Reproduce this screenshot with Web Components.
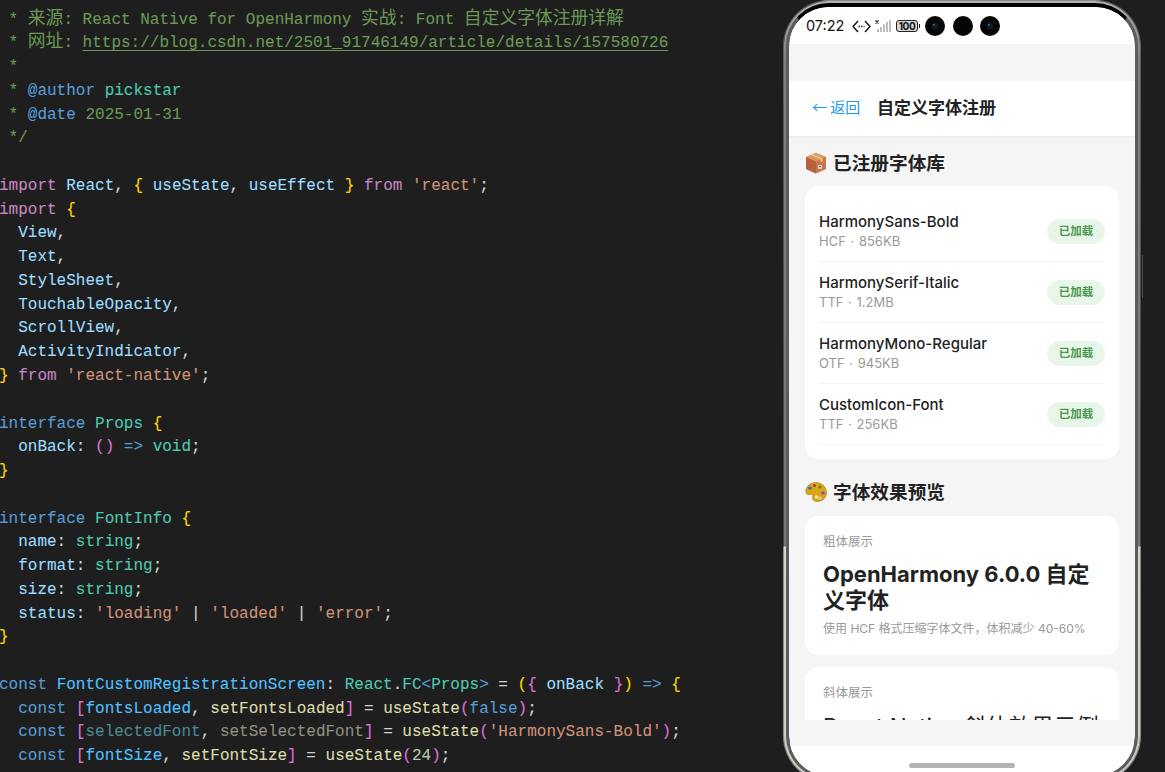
<!DOCTYPE html>
<html>
<head>
<meta charset="utf-8">
<title>Font registration</title>
<style>
    html, body { margin: 0; height: 772px; overflow: hidden; background: #1e1e1e; }
    body { display: flex; align-items: flex-start; }
</style>
</head>
<body>
<code-editor></code-editor>
<phone-frame>
    <status-bar></status-bar>
    <div style="height:37px"></div>
    <nav-header back="← 返回" title="自定义字体注册"></nav-header>
    <scroll-area>
        <section-title icon="box">已注册字体库</section-title>
        <font-list>
            <font-row name="HarmonySans-Bold" meta="HCF · 856KB"></font-row>
            <font-row name="HarmonySerif-Italic" meta="TTF · 1.2MB"></font-row>
            <font-row name="HarmonyMono-Regular" meta="OTF · 945KB"></font-row>
            <font-row name="CustomIcon-Font" meta="TTF · 256KB"></font-row>
        </font-list>
        <section-title icon="palette" style="margin-bottom:13px">字体效果预览</section-title>
        <preview-card label="粗体展示" kind="bold" note="使用 HCF 格式压缩字体文件，体积减少 40-60%">OpenHarmony 6.0.0 自定义字体</preview-card>
        <preview-card label="斜体展示" kind="italic">React Native 斜体效果示例</preview-card>
    </scroll-area>
    <home-bar></home-bar>
</phone-frame>

<script>
const UI_FONT = 'Inter, "Noto Sans CJK SC", sans-serif';

// §class|text§ marks one coloured token
const CODE = [
    '§c| * 来源: React Native for OpenHarmony 实战: Font 自定义字体注册详解§',
    '§c| * 网址: §§u|https://blog.csdn.net/2501_91746149/article/details/157580726§',
    '§c| *§',
    '§c| * §§d|@author§ §t|pickstar§',
    '§c| * §§d|@date§§c| 2025-01-31§',
    '§c| */§',
    '',
    '§k|import§ §v|React§§p|,§ §y|{§ §v|useState§§p|,§ §v|useEffect§ §y|}§ §k|from§ §s|\'react\'§§p|;§',
    '§k|import§ §y|{§',
    '  §v|View§§p|,§',
    '  §v|Text§§p|,§',
    '  §v|StyleSheet§§p|,§',
    '  §v|TouchableOpacity§§p|,§',
    '  §v|ScrollView§§p|,§',
    '  §v|ActivityIndicator§§p|,§',
    '§y|}§ §k|from§ §s|\'react-native\'§§p|;§',
    '',
    '§d|interface§ §t|Props§ §y|{§',
    '  §v|onBack§§p|:§ §m|()§ §d|=>§ §t|void§§p|;§',
    '§y|}§',
    '',
    '§d|interface§ §t|FontInfo§ §y|{§',
    '  §v|name§§p|:§ §t|string§§p|;§',
    '  §v|format§§p|:§ §t|string§§p|;§',
    '  §v|size§§p|:§ §t|string§§p|;§',
    '  §v|status§§p|:§ §s|\'loading\'§ §p|\\|§ §s|\'loaded\'§ §p|\\|§ §s|\'error\'§§p|;§',
    '§y|}§',
    '',
    '§d|const§ §b|FontCustomRegistrationScreen§§p|:§ §t|React§§p|.§§t|FC§§d|&lt;§§t|Props§§d|&gt;§ §p|=§ §y|(§§m|{§ §v|onBack§ §m|}§§y|)§ §d|=>§ §y|{§',
    '  §d|const§ §m|[§§b2|fontsLoaded§§p|,§ §f|setFontsLoaded§§m|]§ §p|=§ §f|useState§§m|(§§d|false§§m|)§§p|;§',
    '  §d|const§ §m|[§§dv|selectedFont§§p|,§ §df|setSelectedFont§§m|]§ §p|=§ §f|useState§§m|(§§s|\'HarmonySans-Bold\'§§m|)§§p|;§',
    '  §d|const§ §m|[§§b2|fontSize§§p|,§ §f|setFontSize§§m|]§ §p|=§ §f|useState§§m|(§§n|24§§m|)§§p|;§',
];

class CodeEditor extends HTMLElement {
    connectedCallback() {
        this.attachShadow({ mode: 'open' });
        let lines = CODE.map(line => {
            let html = line.replace(/§(\w+)\|(.*?)§/g, (_, cls, text) => {
                return `<span class="${cls}">${text.replace(/\\\|/g, '|')}</span>`;
            });
            // CJK runs get the size the editor fallback font had
            html = html.replace(/[\u4e00-\u9fff]+/g, m => `<span class="cjk">${m}</span>`);
            return `<div class="line">${html || ' '}</div>`;
        }).join('');
        this.shadowRoot.innerHTML = `
            <style>
                :host {
                    display: block;
                    flex: 0 0 783px;
                    height: 772px;
                    overflow: hidden;
                    background: #1e1e1e;
                    box-sizing: border-box;
                    padding-top: 8.5px;
                    font: 16px/23.77px "Liberation Mono", monospace;
                    color: #d4d4d4;
                    -webkit-text-stroke: 0.1px;
                }
                .line { white-space: pre; height: 23.77px; margin-left: -1px; }
                .cjk { font: 17.8px/0 "Noto Sans CJK SC", sans-serif; -webkit-text-stroke: 0; }
                .c { color: #6a9955; }
                .u { color: #6a9955; text-decoration: underline; text-underline-offset: 3px; }
                .k { color: #c586c0; }
                .d { color: #569cd6; }
                .v { color: #9cdcfe; }
                .t { color: #4ec9b0; }
                .s { color: #ce9178; }
                .f { color: #dcdcaa; }
                .y { color: #ffd700; }
                .m { color: #da70d6; }
                .b { color: #4fc1ff; }
                .b2 { color: #4fc1ff; }
                .n { color: #b5cea8; }
                .p { color: #d4d4d4; }
                .dv { color: #4a8a94; }
                .df { color: #8f8f7c; }
            </style>
            ${lines}
        `;
    }
}

class PhoneFrame extends HTMLElement {
    connectedCallback() {
        this.attachShadow({ mode: 'open' });
        this.shadowRoot.innerHTML = `
            <style>
                :host {
                    display: block;
                    flex: 0 0 358px;
                    height: 782px;
                    position: relative;
                }
                .outer {
                    height: 100%;
                    box-sizing: border-box;
                    border-radius: 46px;
                    border: 1px solid transparent;
                    background: linear-gradient(180deg, #5e5e5e 0, #404040 545px, #8d8c84 546px, #8d8c84 100%);
                    overflow: hidden;
                }
                .rim {
                    height: 100%;
                    box-sizing: border-box;
                    padding: 2px 2px 2px;
                    border-radius: 45px;
                    background: linear-gradient(180deg, #b0b0b0 0, #808080 60px, #767676 545px, #d8d5c8 546px, #cfcdc2 100%);
                }
                .bezel {
                    height: 100%;
                    box-sizing: border-box;
                    border-radius: 43px;
                    border: solid #5c5c5c;
                    border-width: 4px 3px 3px;
                    border-top-color: #000;
                    background: #000;
                    overflow: hidden;
                }
                .screen {
                    height: 100%;
                    display: flex;
                    flex-direction: column;
                    background: #f5f5f5;
                    border-radius: 38px;
                    overflow: hidden;
                    font-family: ${UI_FONT};
                    color: #222;
                }
                .key {
                    position: absolute;
                    left: 358.5px;
                    top: 255px;
                    width: 1px;
                    height: 43px;
                    background: #4a4a4a;
                }
            </style>
            <div class="outer"><div class="rim"><div class="bezel"><div class="screen"><slot></slot></div></div></div></div>
            <div class="key"></div>
        `;
    }
}

class StatusBar extends HTMLElement {
    connectedCallback() {
        this.attachShadow({ mode: 'open' });
        let camera = `<svg width="20" height="20" viewBox="0 0 20 20"><circle cx="10" cy="10" r="10" fill="#050505"/><circle cx="10" cy="10" r="3.5" fill="#0c1b26"/><circle cx="9" cy="9" r="1" fill="#3a6f8f"/></svg>`;
        this.shadowRoot.innerHTML = `
            <style>
                :host {
                    display: flex;
                    align-items: center;
                    flex: 0 0 37px;
                    background: #fff;
                    padding-left: 17px;
                    box-sizing: border-box;
                }
                .time { font-size: 14.5px; width: 46px; color: #111; }
                .icons { display: flex; align-items: center; gap: 4px; width: 73px; margin-top: 1px; }
                .cams { display: flex; gap: 7.5px; }
                .cams svg { display: block; }
                .batt {
                    font: bold 10px/10px ${UI_FONT};
                    flex: none;
                    width: 22px;
                    height: 12px;
                    box-sizing: border-box;
                    border: 1px solid #222;
                    border-radius: 3px;
                    background: #d6d6d6;
                    text-align: center;
                    color: #111;
                    letter-spacing: -0.4px;
                }
                .nub { flex: none; width: 1px; height: 4px; background: #222; margin-left: -3px; }
            </style>
            <span class="time">07:22</span>
            <span class="icons">
                <svg width="19" height="13" viewBox="0 0 19 13" fill="none" stroke="#111" stroke-width="1.4"><path d="M6 1 1 6.500l5 5.500M13 1l5 5.500-5 5.500"/><path d="M6.500 6.500h6" stroke-dasharray="1.4 1.2"/></svg>
                <svg width="17" height="14" viewBox="0 0 17 14"><path d="M.5 1.500l3 3M3.500 1.500l-3 3" stroke="#222" stroke-width="1.2"/><g fill="#bdbdbd"><rect x="2" y="10" width="2" height="3"/><rect x="5" y="8" width="2" height="5"/><rect x="8" y="5.5" width="2" height="7.5"/><rect x="11" y="3" width="2" height="10"/><rect x="14" y="1" width="2" height="12"/></g></svg>
                <span class="batt">100</span><span class="nub"></span>
            </span>
            <span class="cams">${camera}${camera.replace(/<circle cx="9".*?\/>/, '').replace('#0c1b26', '#050505')}${camera}</span>
        `;
    }
}

class NavHeader extends HTMLElement {
    connectedCallback() {
        this.attachShadow({ mode: 'open' });
        this.shadowRoot.innerHTML = `
            <style>
                :host {
                    display: flex;
                    align-items: center;
                    flex: 0 0 57px;
                    box-sizing: border-box;
                    background: #fff;
                    border-bottom: 2px solid #eeeeee;
                    padding: 0 0 4px 23px;
                }
                .back { color: #2196f3; font: 15px "Noto Sans CJK SC", sans-serif; width: 65px; white-space: nowrap; }
                .title { font-size: 17px; font-weight: 700; color: #222; }
            </style>
            <span class="back">${this.getAttribute('back')}</span>
            <span class="title">${this.getAttribute('title')}</span>
        `;
    }
}

class ScrollArea extends HTMLElement {
    connectedCallback() {
        this.attachShadow({ mode: 'open' });
        this.shadowRoot.innerHTML = `
            <style>
                :host {
                    display: block;
                    flex: 0 0 582px;
                    height: 582px;
                    overflow: hidden;
                    box-sizing: border-box;
                    padding: 0 16px;
                }
            </style>
            <slot></slot>
        `;
    }
}

const EMOJI = {
    box: `<svg width="22" height="22" viewBox="0 0 22 22"><path d="M11 1 21 5v12l-10 4.500L1 17V5z" fill="#c9744a"/><path d="M11 9.500V21.500L1 17V5z" fill="#b5623c"/><path d="M1 5 11 1l10 4-10 4.500z" fill="#dd9465"/><path d="M5.500 3.200l10 4.100v3l2.200-1V6.300l-10-4.300z" fill="#e6c27f"/><rect x="13" y="13" width="4" height="4" fill="#cfd6c6"/><path d="M14 14.500h2" stroke="#5c7d5c"/></svg>`,
    palette: `<svg width="22" height="22" viewBox="0 0 22 22"><path d="M11 1.500C5 1.500 .8 5.500.8 10.500c0 3 2.200 3.500 4.200 3 2-.6 3.200.3 2.700 2.200-.5 2 .5 4.800 4.300 4.800 5 0 9.500-3 9.500-8.500C21.500 6 17 1.500 11 1.500z" fill="#d9a514" stroke="#a87a08" stroke-width=".6"/><ellipse cx="5" cy="7" rx="2" ry="1.500" fill="#2f6fd0"/><circle cx="9.500" cy="4.500" r="1.500" fill="#b5352a"/><circle cx="15" cy="6" r="1.500" fill="#4d8a34"/><ellipse cx="18" cy="12" rx="1.800" ry="1.500" fill="#7d4bc2"/><ellipse cx="15" cy="17" rx="1.800" ry="1.500" fill="#d8d2c0"/><circle cx="11.500" cy="16" r="1.700" fill="#f7e7b0"/></svg>`,
};

class SectionTitle extends HTMLElement {
    connectedCallback() {
        this.attachShadow({ mode: 'open' });
        this.shadowRoot.innerHTML = `
            <style>
                :host {
                    display: flex;
                    align-items: center;
                    gap: 6px;
                    height: 24px;
                    margin: 12px 0 12px;
                    font-size: 18.67px;
                    font-weight: 700;
                    color: #222;
                }
                svg { display: block; flex: none; margin-top: 2px; }
                span { padding-bottom: 2px; }
            </style>
            ${EMOJI[this.getAttribute('icon')]}
            <span><slot></slot></span>
        `;
    }
}

class FontList extends HTMLElement {
    connectedCallback() {
        this.attachShadow({ mode: 'open' });
        this.shadowRoot.innerHTML = `
            <style>
                :host {
                    display: block;
                    background: #fff;
                    border-radius: 14px;
                    padding: 15px 14px 14px;
                    margin-bottom: 20px;
                }
            </style>
            <slot></slot>
        `;
    }
}

class FontRow extends HTMLElement {
    connectedCallback() {
        this.attachShadow({ mode: 'open' });
        this.shadowRoot.innerHTML = `
            <style>
                :host {
                    display: flex;
                    align-items: center;
                    justify-content: space-between;
                    height: 61px;
                    box-sizing: border-box;
                    border-bottom: 1px solid #f3f3f3;
                }
                .name { font-size: 15px; line-height: 18px; padding-top: 2px; font-weight: 500; color: #222; }
                .meta { font-size: 13px; line-height: 20px; color: #999; word-spacing: 1px; }
                .badge {
                    width: 58px;
                    height: 25px;
                    border-radius: 13px;
                    background: #e8f5e9;
                    color: #4a9850;
                    font-size: 11.5px;
                    font-weight: 600;
                    line-height: 24px;
                    text-align: center;
                }
            </style>
            <div>
                <div class="name">${this.getAttribute('name')}</div>
                <div class="meta">${this.getAttribute('meta')}</div>
            </div>
            <span class="badge">已加载</span>
        `;
    }
}

class PreviewCard extends HTMLElement {
    connectedCallback() {
        this.attachShadow({ mode: 'open' });
        let note = this.getAttribute('note');
        this.shadowRoot.innerHTML = `
            <style>
                :host {
                    display: block;
                    background: #fff;
                    border-radius: 14px;
                    padding: 18px 18px 17px;
                    margin-bottom: 12px;
                }
                .label { font-size: 12.5px; line-height: 16px; color: #999; margin-bottom: 11px; }
                .bold { font-size: 22px; line-height: 26px; font-weight: 700; color: #222; }
                .italic { font-size: 22.5px; line-height: 30px; color: #222; }
                .note { font-size: 12px; line-height: 18px; color: #999; margin-top: 7px; }
            </style>
            <div class="label">${this.getAttribute('label')}</div>
            <div class="${this.getAttribute('kind')}"><slot></slot></div>
            ${note ? `<div class="note">${note}</div>` : ''}
        `;
    }
}

class HomeBar extends HTMLElement {
    connectedCallback() {
        this.attachShadow({ mode: 'open' });
        this.shadowRoot.innerHTML = `
            <style>
                :host {
                    display: flex;
                    justify-content: center;
                    flex: 1;
                    background: #fff;
                    margin-top: 26px;
                    padding-top: 17px;
                }
                i { display: block; width: 106px; height: 5px; border-radius: 3px; background: #b4b4b4; }
            </style>
            <i></i>
        `;
    }
}

customElements.define('code-editor', CodeEditor);
customElements.define('phone-frame', PhoneFrame);
customElements.define('status-bar', StatusBar);
customElements.define('nav-header', NavHeader);
customElements.define('scroll-area', ScrollArea);
customElements.define('section-title', SectionTitle);
customElements.define('font-list', FontList);
customElements.define('font-row', FontRow);
customElements.define('preview-card', PreviewCard);
customElements.define('home-bar', HomeBar);
</script>
</body>
</html>
